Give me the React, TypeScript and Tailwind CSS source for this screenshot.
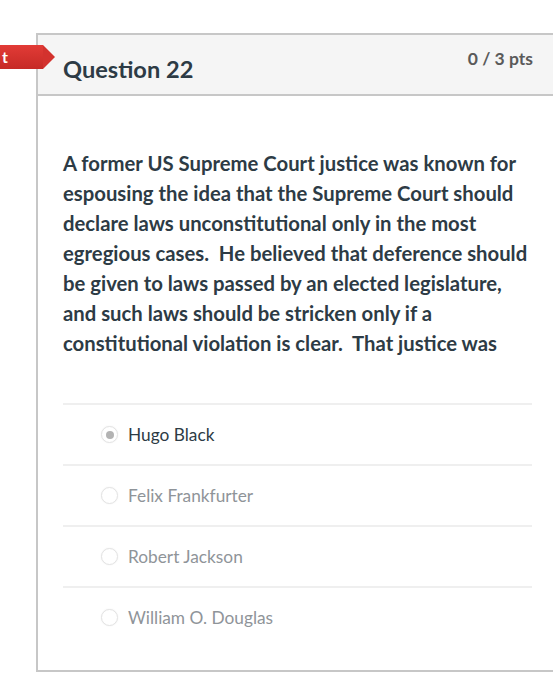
import React from "react";

const answers = [
  { label: "Hugo Black", selected: true },
  { label: "Felix Frankfurter", selected: false },
  { label: "Robert Jackson", selected: false },
  { label: "William O. Douglas", selected: false },
];

function Radio({ selected }: { selected: boolean }) {
  return (
    <span className="flex h-[17px] w-[17px] items-center justify-center rounded-full border border-[#e3e3e3] bg-white shadow-[0_0_2px_rgba(0,0,0,0.06)]">
      {selected && <span className="h-[8px] w-[8px] rounded-full bg-[#b3b3b3]" />}
    </span>
  );
}

export default function App() {
  return (
    <div className="relative h-[700px] w-[553px] bg-white pt-[33px]" style={{ fontFamily: "Lato, 'Open Sans', sans-serif" }}>
      <div className="absolute left-0 top-[45px] flex h-[24px] items-center">
        <div className="flex h-[24px] w-[43px] items-center justify-start bg-gradient-to-b from-[#e23b36] to-[#c62a26] pl-[2px] text-[16px] font-bold text-white">
          t
        </div>
        <div className="h-0 w-0 border-y-[12px] border-l-[12px] border-y-transparent border-l-[#d3322e]" />
      </div>
      <div className="ml-[36px] w-[517px] border-2 border-r-0 border-[#c7c7c7] bg-white">
        <div className="flex h-[61px] items-start justify-between border-b-2 border-[#c7c7c7] bg-[#f5f5f5] pl-[25px] pr-[20px]">
          <div className="pt-[18px] text-[23.6px] font-bold leading-[32px] text-[#2d3b45]">Question 22</div>
          <div className="pt-[12px] text-[17.5px] font-bold leading-[24px] text-[#5a5a5a]">0 / 3 pts</div>
        </div>
        <div className="px-[25px] pt-[52px]">
          <p className="w-[470px] text-[20.3px] font-bold leading-[30px] text-[#2d3b45]">
            A former US Supreme Court justice was known for espousing the idea that the Supreme Court should declare laws unconstitutional only in the most egregious cases.&nbsp; He believed that deference should be given to laws passed by an elected legislature, and such laws should be stricken only if a constitutional violation is clear.&nbsp; That justice was
          </p>
          <div className="mt-[45px] w-[469px] pb-[23px]">
            {answers.map((a) => (
              <div key={a.label} className="flex h-[61px] items-center border-t-2 border-[#efefef] pl-[38px]">
                <Radio selected={a.selected} />
                <span className={`ml-[10px] text-[17.3px] ${a.selected ? "text-[#2d3b45]" : "text-[#8f9499]"}`}>
                  {a.label}
                </span>
              </div>
            ))}
          </div>
        </div>
      </div>
    </div>
  );
}
